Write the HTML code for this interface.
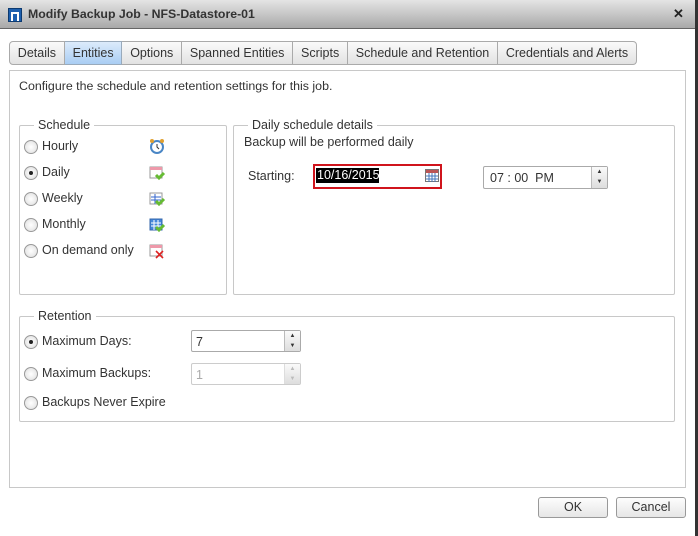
<!DOCTYPE html>
<html><head><style>
*{box-sizing:border-box;margin:0;padding:0}
body{width:698px;height:536px;overflow:hidden;background:#fff;font-family:"Liberation Sans",sans-serif;font-size:12px;color:#333;position:relative}
.a{position:absolute}
.title{left:0;top:0;width:696px;height:29px;background:linear-gradient(#e4e4e4,#a9a9a9);border-bottom:1px solid #666}
.rb{left:695px;top:0;width:3px;height:536px;background:#333}
.tabs{left:9px;top:41px;height:24px;display:flex}
.tab{height:24px;line-height:22px;padding:0 7.8px;border:1px solid #aaa;border-left:none;background:linear-gradient(#fafafa,#e2e2e2);font-size:12.5px;color:#333}
.tab:first-child{border-left:1px solid #aaa;border-radius:4px 0 0 4px}
.tab:last-child{border-radius:0 4px 4px 0}
.tab.on{background:linear-gradient(#dcebfb,#a9cdf3);border-color:#9ab}
.panel{left:9px;top:70px;width:677px;height:418px;border:1px solid #c8c8c8}
fieldset{position:absolute;border:1px solid #c8c8c8;border-radius:2px}
legend{padding:0 4px;margin-left:14px;font-size:12.5px;color:#333}
.r{position:absolute;width:14px;height:14px;border-radius:50%;border:1px solid #999;background:radial-gradient(#fff,#ddd)}
.r.on::after{content:"";position:absolute;left:4px;top:4px;width:4px;height:4px;border-radius:50%;background:#222}
.lb{position:absolute;font-size:12.5px}
.spin{position:absolute;border:1px solid #aaa;border-radius:2px;background:#fff;height:22px}
.arr{position:absolute;right:0;top:0;width:16px;height:20px;border-left:1px solid #bbb;background:linear-gradient(#fafafa,#ddd);font-size:6px;line-height:10px;text-align:center;color:#333}
.btn{position:absolute;top:497px;height:21px;border:1px solid #999;border-radius:3px;background:linear-gradient(#fdfdfd,#e6e6e6);text-align:center;line-height:19px;font-size:12.5px}
</style></head><body>
<div class="a title"></div>
<div class="a" style="left:8px;top:8px;width:14px;height:14px;background:#1d5fae;border:1px solid #0d3a70"><div style="position:absolute;left:2px;top:3px;width:8px;height:9px;border:2px solid #fff;border-bottom:none"></div></div>
<div class="a" style="left:28px;top:7px;font-size:12.3px;font-weight:bold;color:#333">Modify Backup Job - NFS-Datastore-01</div>
<div class="a" style="left:673px;top:6px;font-size:13px;font-weight:bold;color:#222">✕</div>
<div class="a rb"></div>
<div class="a tabs"><div class="tab">Details</div><div class="tab on">Entities</div><div class="tab">Options</div><div class="tab">Spanned Entities</div><div class="tab">Scripts</div><div class="tab">Schedule and Retention</div><div class="tab">Credentials and Alerts</div></div>
<div class="a panel"></div>
<div class="a" style="left:19px;top:79px;font-size:12.4px">Configure the schedule and retention settings for this job.</div>

<fieldset style="left:19px;top:118px;width:208px;height:177px"><legend>Schedule</legend></fieldset>
<div class="r" style="left:24px;top:140px"></div><div class="lb" style="left:42px;top:139px">Hourly</div>
<div class="r on" style="left:24px;top:166px"></div><div class="lb" style="left:42px;top:165px">Daily</div>
<div class="r" style="left:24px;top:192px"></div><div class="lb" style="left:42px;top:191px">Weekly</div>
<div class="r" style="left:24px;top:218px"></div><div class="lb" style="left:42px;top:217px">Monthly</div>
<div class="r" style="left:24px;top:244px"></div><div class="lb" style="left:42px;top:243px">On demand only</div>
<svg class="a" style="left:148px;top:138px" width="18" height="130">
<circle cx="9" cy="9" r="6" fill="#fff" stroke="#4a86c5" stroke-width="2"/><circle cx="4" cy="3" r="2" fill="#e0a030"/><circle cx="14" cy="3" r="2" fill="#e0a030"/><path d="M9 6v3l2 2" stroke="#333" fill="none"/>
<g transform="translate(0,26)"><rect x="2" y="3" width="12" height="11" fill="#fff" stroke="#999"/><rect x="2" y="3" width="12" height="3" fill="#e9a"/><path d="M8 11l3 3 5-5" stroke="#6b3" stroke-width="3" fill="none"/></g>
<g transform="translate(0,52)"><rect x="2" y="3" width="12" height="11" fill="#fff" stroke="#999"/><path d="M3 7h10M3 10h10M7 4v10" stroke="#36c"/><path d="M8 11l3 3 5-5" stroke="#6b3" stroke-width="3" fill="none"/></g>
<g transform="translate(0,78)"><rect x="2" y="3" width="12" height="11" fill="#48d" stroke="#36a"/><path d="M3 7h10M3 10h10M6 4v10M10 4v10" stroke="#fff"/><path d="M8 11l3 3 5-5" stroke="#6b3" stroke-width="3" fill="none"/></g>
<g transform="translate(0,104)"><rect x="2" y="3" width="12" height="11" fill="#fff" stroke="#999"/><rect x="2" y="3" width="12" height="3" fill="#e9a"/><path d="M8 9l7 7M15 9l-7 7" stroke="#d22" stroke-width="1.6"/></g>
</svg>

<fieldset style="left:233px;top:118px;width:442px;height:177px"><legend>Daily schedule details</legend></fieldset>
<div class="lb" style="left:244px;top:135px">Backup will be performed daily</div>
<div class="lb" style="left:248px;top:169px">Starting:</div>
<div class="a" style="left:313px;top:164px;width:129px;height:25px;border:2px solid #d0141c;background:#fff"></div>
<div class="a" style="left:316px;top:168px;width:63px;height:15px;background:#000;color:#fff;font-size:12.5px;line-height:15px;padding-left:1px">10/16/2015</div>
<svg class="a" style="left:425px;top:169px" width="14" height="13"><rect x="0.5" y="0.5" width="13" height="12" fill="#fff" stroke="#777"/><rect x="1" y="1" width="12" height="3" fill="#b55"/><path d="M1 7h12M1 10h12M4 4v9M7 4v9M10 4v9" stroke="#47b"/></svg>
<div class="spin" style="left:483px;top:166px;width:125px;height:23px"><div class="lb" style="left:6px;top:4px">07 : 00&nbsp; PM</div><div class="arr" style="height:21px;line-height:10px">▲<br>▼</div></div>

<fieldset style="left:19px;top:309px;width:656px;height:113px"><legend>Retention</legend></fieldset>
<div class="r on" style="left:24px;top:335px"></div><div class="lb" style="left:42px;top:334px">Maximum Days:</div>
<div class="spin" style="left:191px;top:330px;width:110px"><div class="lb" style="left:4px;top:4px">7</div><div class="arr">▲<br>▼</div></div>
<div class="r" style="left:24px;top:367px"></div><div class="lb" style="left:42px;top:366px">Maximum Backups:</div>
<div class="spin" style="left:191px;top:363px;width:110px;border-color:#ccc"><div class="lb" style="left:4px;top:4px;color:#aaa">1</div><div class="arr" style="color:#bbb;border-color:#ddd">▲<br>▼</div></div>
<div class="r" style="left:24px;top:396px"></div><div class="lb" style="left:42px;top:395px">Backups Never Expire</div>

<div class="btn" style="left:538px;width:70px">OK</div>
<div class="btn" style="left:616px;width:70px">Cancel</div>
</body></html>
